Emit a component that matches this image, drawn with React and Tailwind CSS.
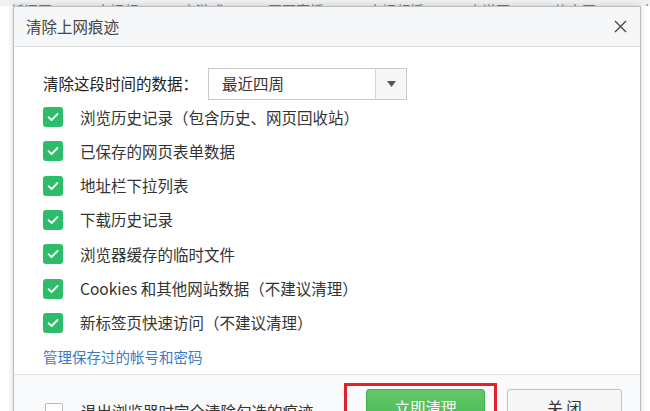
import React from "react";

const FONT = { fontFamily: '"Noto Sans CJK SC", "Noto Sans", sans-serif' };

const items = [
  "浏览历史记录（包含历史、网页回收站）",
  "已保存的网页表单数据",
  "地址栏下拉列表",
  "下载历史记录",
  "浏览器缓存的临时文件",
  "Cookies 和其他网站数据（不建议清理）",
  "新标签页快速访问（不建议清理）",
];

function CheckBox({ checked }) {
  if (!checked) {
    return <div className="w-[18px] h-[18px] shrink-0 rounded-[2px] border border-[#b9b9b9] bg-white" />;
  }
  return (
    <div className="w-[20px] h-[20px] shrink-0 rounded-[3px] bg-[#2dbd6a] flex items-center justify-center">
      <svg width="12" height="10" viewBox="0 0 12 10" fill="none">
        <path d="M1.5 5.2 L4.6 8 L10.5 2" stroke="white" strokeWidth="1.8" strokeLinecap="round" strokeLinejoin="round" />
      </svg>
    </div>
  );
}

// page behind the dialog, only its edges are visible
function Backdrop() {
  return (
    <div className="flex h-full w-full">
      {/* left edge */}
      <div className="w-[13px] h-full flex flex-col overflow-hidden text-[15px] leading-none text-[#333] bg-[#fafafa]">
        <div className="h-[8px] bg-[#eef0f2] border-b border-[#dcdcdc]" />
        <div className="h-[44px]" />
        <div className="h-[20px] -ml-[2px]">苔</div>
        <div className="h-[18px]" />
        <div className="h-[20px] -ml-[2px]">点</div>
        <div className="h-[14px]" />
        <div className="h-[20px] -ml-[4px]">：</div>
        <div className="h-[24px] border-b border-[#e2e2e2]" />
        <div className="h-[14px] bg-[#e9e9e9]" />
        <div className="h-[4px] bg-white" />
        <div className="h-[26px] bg-[#22b14c] text-white flex items-center -ml-[1px]">热</div>
        <div className="h-[12px] bg-white" />
        <div className="flex-1 bg-gradient-to-b from-[#c9c9c9] via-[#6b6b6b] to-[#0c0c0c] flex items-end">
          <div className="ml-[9px] w-[3px] h-[26px] bg-[#e8e8e8]" />
        </div>
      </div>
      {/* middle: top tab strip, only the bottom of its labels shows */}
      <div className="flex-1 flex flex-col">
        <div className="h-[6px] bg-[#eef0f2] overflow-hidden flex items-end">
          <div className="flex gap-[44px] pl-[10px] text-[14px] leading-[14px] text-[#777] -mb-[11px] whitespace-nowrap">
            <span>新闻网</span><span>小视频</span><span>小游戏</span><span>网页直播</span>
            <span>小视频播</span><span>小说网</span><span>体育网</span><span>小游戏</span>
          </div>
        </div>
        <div className="flex-1 bg-white" />
      </div>
      {/* right edge */}
      <div className="w-[9px] h-full flex flex-col overflow-hidden text-[15px] leading-none text-[#333] bg-white border-l border-[#c8c8c8] whitespace-nowrap">
        <div className="h-[4px]" />
        <div className="h-[20px] text-[#666]">求</div>
        <div className="h-[12px] bg-[#eef0f2]" />
        <div className="h-[10px]" />
        <div className="h-[20px]">隹</div>
        <div className="h-[16px]" />
        <div className="h-[20px] text-[#28b44c]">0</div>
        <div className="h-[12px]" />
        <div className="h-[20px]">荣</div>
        <div className="h-[18px] border-b border-[#e2e2e2]" />
        <div className="h-[10px] bg-[#f0f0f0]" />
        <div className="h-[20px]" />
        <div className="h-[20px]">年</div>
        <div className="h-[26px]" />
        <div className="h-[20px]">言</div>
        <div className="h-[8px]" />
        <div className="h-[20px]">炎</div>
        <div className="h-[16px]" />
        <div className="h-[20px] text-[#f0a040]">寿</div>
        <div className="h-[46px]" />
        <div className="h-[20px]">公</div>
      </div>
    </div>
  );
}

function Dialog() {
  return (
    <div className="absolute left-[13px] top-[6px] w-[628px] h-[430px] bg-white border border-[#bdbdbd] shadow-[0_0_6px_rgba(0,0,0,0.18)] flex flex-col">
      {/* title bar */}
      <div className="h-[40px] shrink-0 bg-[#f6f7f8] border-b border-[#dedede] flex items-center justify-between pl-[12px] pr-[12px]">
        <span className="text-[15.5px] text-[#444]">清除上网痕迹</span>
        <svg width="13" height="13" viewBox="0 0 13 13" className="mr-[1px]">
          <path d="M1 1 L12 12 M12 1 L1 12" stroke="#444" strokeWidth="1.3" />
        </svg>
      </div>

      {/* body */}
      <div className="flex flex-col pl-[29px] pt-[21px] text-[15.5px] text-[#333]">
        <div className="flex items-center h-[32px]">
          <span className="w-[165px] text-[#222]">清除这段时间的数据：</span>
          <div className="w-[199px] h-[32px] border border-[#c9c9c9] flex">
            <div className="flex-1 flex items-center pl-[13px] text-[#333]">最近四周</div>
            <div className="w-[31px] border-l border-[#d4d4d4] bg-[#f7f7f7] flex items-center justify-center">
              <svg width="9" height="6" viewBox="0 0 9 6">
                <path d="M0 0 H9 L4.5 6 Z" fill="#555" />
              </svg>
            </div>
          </div>
        </div>

        {items.map((label) => (
          <div key={label} className="h-[34.3px] flex items-center gap-[17px]">
            <CheckBox checked />
            <span>{label}</span>
          </div>
        ))}

        <div className="h-[34px] flex items-center text-[14.5px] text-[#3a7cc8]">
          管理保存过的帐号和密码
        </div>
      </div>

      {/* footer */}
      <div className="relative flex-1 bg-[#f9fafb] border-t border-[#e3e3e3] flex items-start pt-[14px] pl-[31px] pr-[18px]">
        <div className="flex items-center gap-[18px] mt-[11px]">
          <CheckBox checked={false} />
          <span className="text-[15.5px] text-[#333]">退出浏览器时完全清除勾选的痕迹</span>
        </div>
        <div className="ml-auto flex gap-[22px]">
          <button className="w-[119px] h-[38px] rounded-[3px] bg-gradient-to-b from-[#62c96a] to-[#45b652] border border-[#3fae4c] text-white text-[15.5px]">
            立即清理
          </button>
          <button className="w-[115px] h-[38px] rounded-[3px] bg-[#f7f7f7] border border-[#c4c4c4] text-[#333] text-[15.5px]">
            关 闭
          </button>
        </div>
        {/* red highlight around the clean button */}
        <div className="absolute left-[330px] top-[8px] w-[153px] h-[60px] border-[3px] border-[#e0232b]" />
      </div>
    </div>
  );
}

export default function App() {
  return (
    <div className="relative w-[650px] h-[411px] overflow-hidden" style={FONT}>
      <Backdrop />
      <Dialog />
    </div>
  );
}
